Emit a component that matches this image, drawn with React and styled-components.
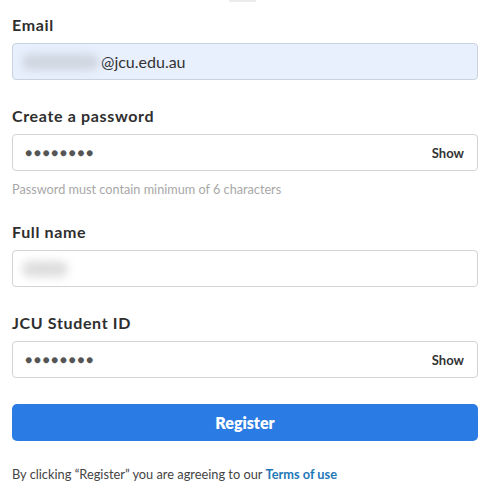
import React from 'react'
import styled, { createGlobalStyle } from 'styled-components'

const GlobalStyle = createGlobalStyle`
  body {
    margin: 0;
    background: #ffffff;
    font-family: "Lato", "Noto Sans", sans-serif;
    color: #2b2b2b;
  }
`

const Page = styled.div`
  width: 489px;
  height: 496px;
  overflow: hidden;
  position: relative;
`

const Nub = styled.div`
  position: absolute;
  top: 0;
  left: 229px;
  width: 27px;
  height: 2px;
  background: #ececec;
`

const Form = styled.form`
  display: flex;
  flex-direction: column;
  padding: 15px 11px 0 12px;
`

const Field = styled.div`
  display: flex;
  flex-direction: column;
  margin-bottom: ${(props) => props.$tight ? '0' : '26px'};
`

const Label = styled.label`
  font-size: 16px;
  font-weight: 700;
  line-height: 20px;
  color: #2e2e2e;
  margin-bottom: 8px;
  letter-spacing: 0.65px;
`

const InputBox = styled.div`
  height: 37px;
  box-sizing: border-box;
  border: 1px solid ${(props) => props.$filled ? '#c9d2de' : '#d3d3d3'};
  border-radius: 4px;
  background: ${(props) => props.$filled ? '#e8f0fe' : '#ffffff'};
  display: flex;
  align-items: center;
  padding: 0 13px 0 9px;
  font-size: 16px;
  color: #333;
`

const Blur = styled.span`
  display: inline-block;
  width: ${(props) => props.$w}px;
  height: 16px;
  border-radius: 8px;
  background: ${(props) => props.$c || '#cfd6e0'};
  filter: blur(4px);
  margin-right: 2px;
`

const Dots = styled.span`
  flex: 1;
  font-size: 12px;
  letter-spacing: 1.5px;
  color: #555;
  padding-left: 3px;
`

const ShowBtn = styled.span`
  font-size: 13px;
  font-weight: 700;
  color: #333;
`

const Hint = styled.div`
  font-size: 12.7px;
  line-height: 16px;
  color: #a8a8a8;
  margin-top: 10px;
  margin-bottom: 25px;
`

const Button = styled.button`
  height: 37px;
  border: none;
  border-radius: 5px;
  background: #2a7be3;
  color: #fff;
  font-family: inherit;
  font-size: 16px;
  font-weight: 800;
  margin-bottom: 25px;
  cursor: pointer;
`

const Footer = styled.p`
  margin: 0;
  font-size: 12.8px;
  line-height: 16px;
  color: #444;
`

const TermsLink = styled.a`
  color: #1f78b8;
  font-weight: 700;
  text-decoration: none;
`

const dots = '\u25CF\u25CF\u25CF\u25CF\u25CF\u25CF\u25CF\u25CF'

export default function App() {
  return (
    <Page>
      <GlobalStyle />
      <Nub />
      <Form onSubmit={(e) => e.preventDefault()}>
        <Field>
          <Label>Email</Label>
          <InputBox $filled>
            <Blur $w={77} />
            <span>@jcu.edu.au</span>
          </InputBox>
        </Field>

        <Field $tight>
          <Label>Create a password</Label>
          <InputBox>
            <Dots>{dots}</Dots>
            <ShowBtn>Show</ShowBtn>
          </InputBox>
        </Field>
        <Hint>Password must contain minimum of 6 characters</Hint>

        <Field>
          <Label>Full name</Label>
          <InputBox>
            <Blur $w={46} $c="#dedede" />
          </InputBox>
        </Field>

        <Field>
          <Label>JCU Student ID</Label>
          <InputBox>
            <Dots>{dots}</Dots>
            <ShowBtn>Show</ShowBtn>
          </InputBox>
        </Field>

        <Button type="submit">Register</Button>

        <Footer>
          By clicking “Register” you are agreeing to our <TermsLink href="#">Terms of use</TermsLink>
        </Footer>
      </Form>
    </Page>
  )
}
